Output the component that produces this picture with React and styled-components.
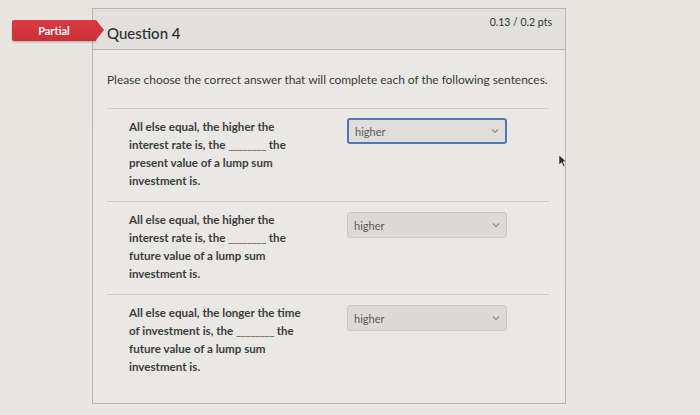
import React from "react";
import styled, { createGlobalStyle } from "styled-components";

const GlobalStyle = createGlobalStyle`
  html, body {
    margin: 0;
    padding: 0;
    background: #e6e4df;
    font-family: Lato, "Open Sans", sans-serif;
    color: #3b3b3b;
  }
`;

const questions = [
  {
    lines: ["All else equal, the higher the", "interest rate is, the", "present value of a lump sum", "investment is."],
    focused: true,
  },
  {
    lines: ["All else equal, the higher the", "interest rate is, the", "future value of a lump sum", "investment is."],
  },
  {
    lines: ["All else equal, the longer the time", "of investment is, the", "future value of a lump sum", "investment is."],
  },
];

const Chevron = () => (
  <svg width="8" height="6" viewBox="0 0 8 6">
    <path d="M1 1.5 L4 4.5 L7 1.5" fill="none" stroke="#8a8f9c" strokeWidth="1.2" />
  </svg>
);

const Pointer = () => (
  <svg width="10" height="14" viewBox="0 0 10 14">
    <path d="M1 1 L1 11 L3.5 8.5 L5.5 12.5 L7 11.8 L5 7.8 L8.5 7.8 Z" fill="#2c2c2c" stroke="#f2f2f2" strokeWidth="0.6" />
  </svg>
);

const App = () => {
  return (
    <Page>
      <GlobalStyle />
      <Badge>Partial</Badge>
      <Card>
        <Header>
          <Title>Question 4</Title>
          <Points>0.13 / 0.2 pts</Points>
        </Header>
        <Body>
          <Prompt>Please choose the correct answer that will complete each of the following sentences.</Prompt>
          <List>
            {questions.map((q, i) => (
              <Row key={i}>
                <Sentence>
                  {q.lines[0]}
                  <br />
                  {q.lines[1]} <Blank>________</Blank> the
                  <br />
                  {q.lines[2]}
                  <br />
                  {q.lines[3]}
                </Sentence>
                <Select $focused={q.focused}>
                  <span>higher</span>
                  <Chevron />
                </Select>
              </Row>
            ))}
          </List>
        </Body>
      </Card>
      <Cursor>
        <Pointer />
      </Cursor>
    </Page>
  );
};

const Page = styled.div`
  position: relative;
  width: 700px;
  height: 415px;
  padding: 8px 0 0 92px;
  box-sizing: border-box;
  overflow: hidden;
  background: linear-gradient(#e7e5e0, #e9e7e3);
`;

const Badge = styled.div`
  position: absolute;
  z-index: 2;
  left: 12px;
  top: 20px;
  width: 84px;
  height: 21px;
  box-sizing: border-box;
  display: flex;
  align-items: center;
  justify-content: center;
  background: linear-gradient(#dc3a42, #cc2f37);
  color: #fff;
  font-size: 11px;
  font-weight: 700;
  border-radius: 2px 0 0 2px;
  box-shadow: 0 1px 2px rgba(0, 0, 0, 0.25);
  &::after {
    content: "";
    position: absolute;
    right: -8px;
    top: 0;
    border-top: 10.5px solid transparent;
    border-bottom: 10.5px solid transparent;
    border-left: 8px solid #d4353d;
  }
`;

const Card = styled.div`
  width: 474px;
  height: 396px;
  border: 1px solid #b9b7b2;
  box-sizing: border-box;
  background: #e9e8e4;
  display: flex;
  flex-direction: column;
`;

const Header = styled.div`
  height: 41px;
  flex-shrink: 0;
  box-sizing: border-box;
  background: #e1e0dc;
  border-bottom: 1px solid #b9b7b2;
  position: relative;
  display: flex;
  align-items: flex-end;
  padding: 0 14px 7px 14px;
`;

const Title = styled.div`
  font-size: 15px;
  font-weight: 500;
  color: #2f2f2f;
`;

const Points = styled.div`
  position: absolute;
  right: 13px;
  top: 7px;
  font-size: 10.5px;
  color: #333;
`;

const Body = styled.div`
  padding: 22px 16px 0 14px;
`;

const Prompt = styled.div`
  font-size: 12px;
  letter-spacing: -0.05px;
  white-space: nowrap;
  color: #3c3c3c;
  line-height: 16px;
  padding-bottom: 20px;
  border-bottom: 1px solid #d0cecb;
`;

const List = styled.div`
  display: flex;
  flex-direction: column;
`;

const Row = styled.div`
  display: flex;
  align-items: flex-start;
  height: 93px;
  box-sizing: border-box;
  padding: 9px 0 0 22px;
  border-bottom: 1px solid #d0cecb;
  &:last-child {
    border-bottom: none;
  }
`;

const Sentence = styled.div`
  width: 218px;
  font-size: 11.6px;
  font-weight: 700;
  line-height: 18px;
  color: #3d3d3d;
`;

const Blank = styled.span`
  color: #555;
  font-weight: 400;
  letter-spacing: -0.6px;
`;

const Select = styled.div`
  width: 160px;
  height: 26px;
  box-sizing: border-box;
  display: flex;
  align-items: center;
  justify-content: space-between;
  padding: 0 6px 0 6px;
  font-size: 11px;
  color: #5a5a5a;
  background: ${(p) => (p.$focused ? "#deddd9" : "#dbdad6")};
  border: ${(p) => (p.$focused ? "2px solid #5574b3" : "1px solid #cbc9c5")};
  border-radius: 3px;
  margin-top: ${(p) => (p.$focused ? "0" : "1px")};
`;

const Cursor = styled.div`
  position: absolute;
  left: 558px;
  top: 152px;
`;

export default App;
